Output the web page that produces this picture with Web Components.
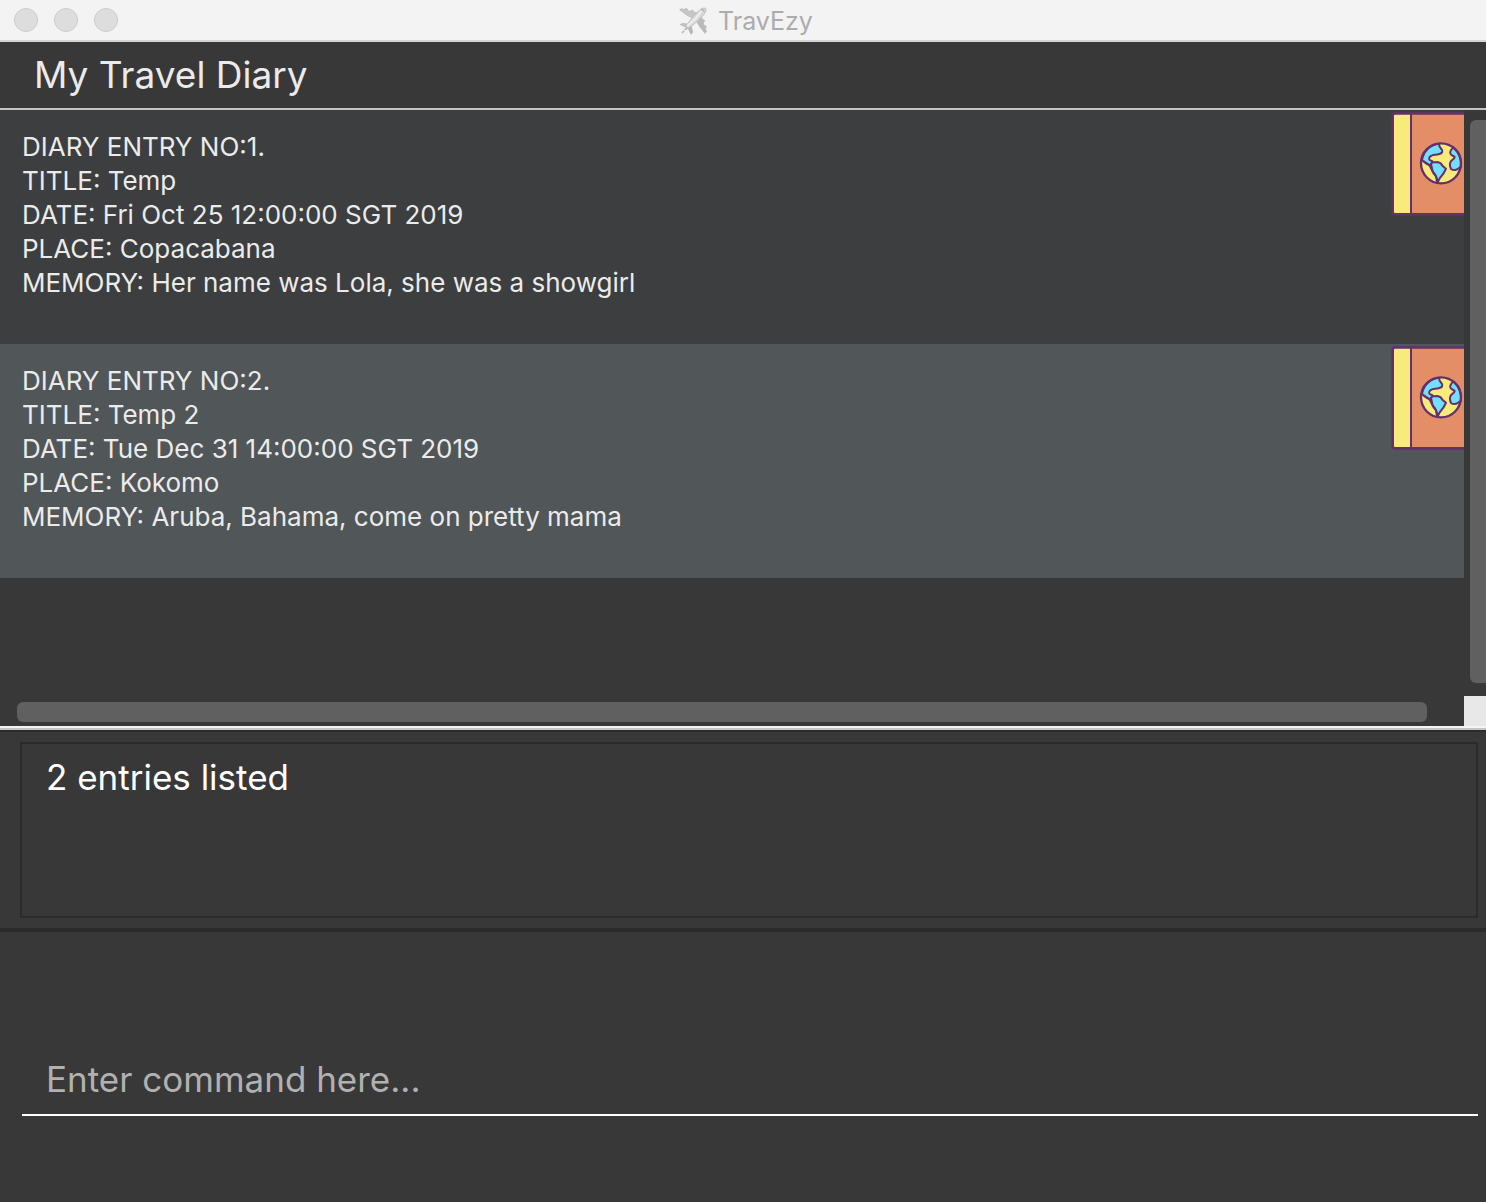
<!DOCTYPE html>
<html lang="en">
<head>
<meta charset="utf-8">
<title>TravEzy</title>
<style>
  :root {
    --bg: #383838;
    --edge: #2b2b2b;
    --text: #ebebeb;
    --thumb: #606060;
  }
  html, body { height: 100%; }
  body {
    margin: 0;
    background: var(--bg);
    color: var(--text);
    font-family: Inter, "Liberation Sans", sans-serif;
  }
</style>
</head>
<body>
<travel-app>
  <window-bar slot="bar">TravEzy</window-bar>
  <diary-panel slot="diary">
    <span slot="heading">My Travel Diary</span>
    <diary-entry no="1" name="Temp" date="Fri Oct 25 12:00:00 SGT 2019" place="Copacabana">Her name was Lola, she was a showgirl</diary-entry>
    <diary-entry no="2" name="Temp 2" date="Tue Dec 31 14:00:00 SGT 2019" place="Kokomo">Aruba, Bahama, come on pretty mama</diary-entry>
  </diary-panel>
  <result-display slot="result">2 entries listed</result-display>
  <command-box slot="command"></command-box>
</travel-app>
<script>
  const define = (name, html, setup) => {
    const template = document.createElement('template');
    template.innerHTML = html;
    customElements.define(name, class extends HTMLElement {
      constructor() {
        super();
        this.attachShadow({ mode: 'open' }).append(template.content.cloneNode(true));
      }
      connectedCallback() {
        if (setup) setup(this, this.shadowRoot);
      }
    });
  };

  define('plane-icon', `
    <style>
      :host { display: block; width: 28px; height: 28px; }
      svg { display: block; width: 100%; height: 100%; }
    </style>
    <svg viewBox="28 19 84 84" aria-hidden="true">
      <g stroke="#b4b4b4" stroke-width="2" stroke-linejoin="round">
        <path fill="#c6c6c6" d="M30 27l6-3 9 3 3-4 5 2v5l10 2 3-4 5 2v4l13 3-14 16-18-9z"/>
        <path fill="#bababa" d="M106 98l4-6-3-9 3-3-2-5h-5l-2-10 4-3-2-5h-5l-3-12-16 14 11 19z"/>
        <path fill="#c2c2c2" d="M32 72l6-4 20 3-5 10z"/>
        <path fill="#b4b4b4" d="M64 101l5-6-4-19-10 6z"/>
        <path fill="#d6d6d6" d="M46 87c2-12 19-36 37-53 10-9 20-15 25-11 4 5-2 16-12 26-16 17-38 36-50 38z"/>
      </g>
      <path d="M54 75c12-9 29-25 40-41" fill="none" stroke="#ececec" stroke-width="7" stroke-linecap="round"/>
      <path d="M94 25c5 1 9 5 10 9" fill="none" stroke="#a8a8a8" stroke-width="3"/>
      <path d="M37 97l7-7" stroke="#b5b5b5" stroke-width="4"/>
      <path d="M54 78l-9 10" stroke="#b0b0b0" stroke-width="3"/>
    </svg>`);

  define('book-icon', `
    <style>
      :host { display: block; width: 73px; height: 104px; }
      svg { display: block; width: 100%; height: 100%; }
    </style>
    <svg viewBox="33 36 219 312" role="img" aria-label="Travel diary">
      <rect x="38" y="40.500" width="260" height="302.500" rx="7" fill="#e38e66"/>
      <path fill="#f8ea7b" d="M38 41h55v302H38z"/>
      <g stroke="#64306b" stroke-linejoin="round">
        <path d="M93 41v302" stroke-width="6"/>
        <rect x="38" y="40.500" width="260" height="302.500" rx="7" fill="none" stroke-width="8"/>
        <circle cx="183" cy="190" r="60" fill="#f8ea7b" stroke="none"/>
        <g fill="#73dfff" stroke-width="6">
          <path d="M126 180C130 154 150 134 177 131c0 8 3 12 7 16 6 6 3 13-6 15-10 4-18 1-25 6-7 3-7 11-2 13 5 3 10 3 6 6-3 3 1 7-5 8-9 1-17-7-26-15z"/>
          <path d="M153 191c4-5 10-5 18-5 10 1 14 6 17 12l10 8-8 15-11 14-7 14c0-13-2-20-9-26-7-8-7-18-10-32z"/>
          <path d="M220 142c-8 8-11 12-9 18 0 6 10 7 13 11-1 7-8 8-12 14-4 7-2 15 1 22 8 5 16 3 22-1l8-6c2-26-8-45-23-58z"/>
        </g>
        <path d="M130 183l16 11c8 6 8 20 16 25 6 6 8 15 9 28" fill="none" stroke-width="6"/>
        <circle cx="183" cy="190" r="60" fill="none" stroke-width="7"/>
      </g>
    </svg>`);

  define('window-bar', `
    <style>
      :host {
        display: grid;
        grid-template-columns: 1fr auto 1fr;
        align-items: center;
        height: 40px;
        padding: 0 8px 0 14px;
        background: #f3f3f3;
        border-bottom: 2px solid #d4d4d4;
        color: #acacac;
        font-size: 25px;
        line-height: 38px;
      }
      .lights { display: flex; gap: 16px; }
      button {
        box-sizing: border-box;
        width: 24px;
        height: 24px;
        padding: 0;
        border: 1px solid #cdcdcd;
        border-radius: 50%;
        background: #dddddd;
      }
      .title { display: flex; align-items: center; gap: 11px; padding-top: 2px; }
    </style>
    <div class="lights">
      <button aria-label="Close"></button>
      <button aria-label="Minimise"></button>
      <button aria-label="Zoom"></button>
    </div>
    <div class="title"><plane-icon></plane-icon><slot></slot></div>`);

  define('diary-entry', `
    <style>
      :host {
        display: flex;
        justify-content: space-between;
        align-items: flex-start;
        padding: 2px 0 44px 22px;
        background: #3c3e3f;
        font-size: 26px;
        line-height: 34px;
      }
      :host(:nth-of-type(even)) { background: #515658; }
      .lines { padding-top: 18px; }
      book-icon { flex: none; }
    </style>
    <div class="lines">
      <div>DIARY ENTRY NO:<span id="no"></span>.</div>
      <div>TITLE: <span id="name"></span></div>
      <div>DATE: <span id="date"></span></div>
      <div>PLACE: <span id="place"></span></div>
      <div>MEMORY: <slot></slot></div>
    </div>
    <book-icon></book-icon>`,
    (host, root) => {
      for (const key of ['no', 'name', 'date', 'place']) {
        root.getElementById(key).textContent = host.getAttribute(key);
      }
    });

  define('diary-panel', `
    <style>
      :host { display: flex; flex-direction: column; }
      h1 {
        margin: 0;
        padding: 0 34px;
        font-size: 37px;
        font-weight: 400;
        line-height: 66px;
        border-bottom: 2px solid #c4c4c4;
      }
      .view {
        flex: 1;
        display: grid;
        grid-template-columns: 1fr 22px;
        grid-template-rows: 1fr 30px;
      }
      .track-y { display: flex; padding: 10px 0 13px 6px; }
      .track-x { display: flex; padding: 6px 37px 4px 17px; }
      .thumb { flex: 1; background: var(--thumb); border-radius: 6px; }
      .track-y .thumb { border-radius: 6px 0 0 6px; }
      .corner { background: #e8e8e8; }
    </style>
    <h1><slot name="heading"></slot></h1>
    <div class="view">
      <div class="entries"><slot></slot></div>
      <div class="track-y"><div class="thumb"></div></div>
      <div class="track-x"><div class="thumb"></div></div>
      <div class="corner"></div>
    </div>`);

  define('result-display', `
    <style>
      :host {
        display: block;
        padding: 10px 8px 10px 20px;
        border-top: 2px solid var(--edge);
        border-bottom: 4px solid var(--edge);
      }
      output {
        display: block;
        min-height: 148px;
        padding: 12px 24px;
        border: 2px solid var(--edge);
        color: #fff;
        font-size: 35px;
        line-height: 42px;
      }
    </style>
    <output><slot></slot></output>`);

  define('command-box', `
    <style>
      :host { display: block; padding: 112px 8px 86px 22px; }
      input {
        display: block;
        box-sizing: border-box;
        width: 100%;
        height: 72px;
        margin: 0;
        padding: 0 24px;
        border: 0;
        border-bottom: 2px solid #fff;
        border-radius: 0;
        outline: 0;
        background: transparent;
        color: #fff;
        font: inherit;
        font-size: 35px;
      }
      input::placeholder { color: #b1b1b1; opacity: 1; }
    </style>
    <input type="text" aria-label="Command" placeholder="Enter command here...">`);

  define('travel-app', `
    <style>
      :host { display: flex; flex-direction: column; min-height: 100vh; }
      .diary { flex: 1; display: flex; }
      ::slotted(diary-panel) { flex: 1; }
      .divider { height: 2px; background: #c4c4c4; border-top: 2px solid #f4f4f4; }
    </style>
    <slot name="bar"></slot>
    <div class="diary"><slot name="diary"></slot></div>
    <div class="divider"></div>
    <slot name="result"></slot>
    <slot name="command"></slot>`);
</script>
</body>
</html>
